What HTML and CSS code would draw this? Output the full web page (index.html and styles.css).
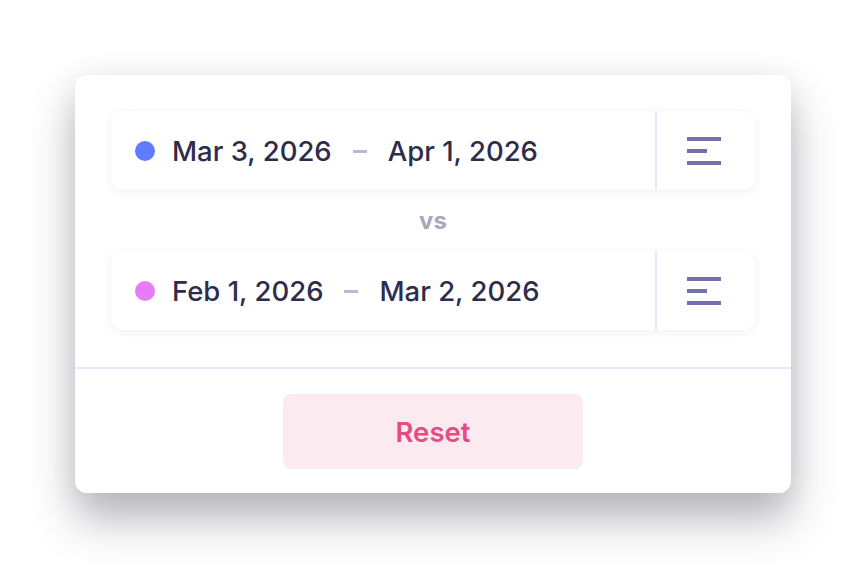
FILE: index.html
```html
<!DOCTYPE html>
<html lang="en">
<head>
    <meta charset="UTF-8">
    <meta name="viewport" content="width=device-width, initial-scale=1.0">
    <title>Compare ranges</title>
    <link rel="stylesheet" href="styles.css">
</head>
<body>

<div class="card">
    <div class="ranges">
        <div class="range">
            <div class="range-dates">
                <span class="dot dot-current"></span>
                <span class="date">Mar 3, 2026</span>
                <span class="dash"></span>
                <span class="date">Apr 1, 2026</span>
            </div>
            <button class="range-menu" aria-label="Presets">
                <svg width="34" height="28" viewBox="0 0 34 28">
                    <rect x="0" y="0" width="34" height="4" fill="#7471a8"/>
                    <rect x="0" y="12" width="20" height="4" fill="#7471a8"/>
                    <rect x="0" y="24" width="34" height="4" fill="#7471a8"/>
                </svg>
            </button>
        </div>

        <div class="vs">vs</div>

        <div class="range">
            <div class="range-dates">
                <span class="dot dot-previous"></span>
                <span class="date">Feb 1, 2026</span>
                <span class="dash"></span>
                <span class="date">Mar 2, 2026</span>
            </div>
            <button class="range-menu" aria-label="Presets">
                <svg width="34" height="28" viewBox="0 0 34 28">
                    <rect x="0" y="0" width="34" height="4" fill="#7471a8"/>
                    <rect x="0" y="12" width="20" height="4" fill="#7471a8"/>
                    <rect x="0" y="24" width="34" height="4" fill="#7471a8"/>
                </svg>
            </button>
        </div>
    </div>

    <div class="card-footer">
        <button class="reset-btn">Reset</button>
    </div>
</div>

</body>
</html>
```

FILE: styles.css
```css
body {
    font-family: Inter, "Noto Sans", sans-serif;
    margin: 0;
    padding: 0;
    display: flex;
    justify-content: center;
    align-items: center;
    min-height: 100vh;
    background-color: #ffffff;
}
.card {
    width: 716px;
    background: white;
    border-radius: 12px;
    box-shadow: 0 26px 44px rgba(40, 40, 60, 0.34), 0 0 30px rgba(40, 40, 60, 0.06);
}
.ranges {
    padding: 36px 36px 37px;
    border-bottom: 2px solid #e9e7fb;
}
.range {
    display: flex;
    height: 79px;
    background: white;
    border-radius: 12px;
    box-shadow: 0 2px 10px rgba(40, 40, 80, 0.07);
}
.range-dates {
    flex: 1;
    display: flex;
    align-items: center;
    padding-left: 24px;
    border-right: 2px solid #e8e6fa;
}
.dot {
    width: 20px;
    height: 20px;
    border-radius: 50%;
    margin-right: 17px;
}
.dot-current {
    background-color: #5f7cff;
}
.dot-previous {
    background-color: #e77cf6;
}
.date {
    font-size: 27.5px;
    font-weight: 500;
    color: #2e2c4b;
}
.dash {
    width: 14px;
    height: 3px;
    background-color: #bbb9d8;
    margin: 2px 21px 0;
}
.range-menu {
    width: 98px;
    display: flex;
    align-items: center;
    justify-content: center;
    background: none;
    border: none;
    padding: 0 4px 0 0;
    cursor: pointer;
}
.vs {
    height: 61px;
    display: flex;
    align-items: center;
    justify-content: center;
    font-size: 24px;
    font-weight: 700;
    color: #aaa9bc;
}
.card-footer {
    display: flex;
    justify-content: center;
    padding: 25px 0 24px;
}
.reset-btn {
    width: 300px;
    height: 75px;
    border: none;
    border-radius: 8px;
    background-color: #fceaf1;
    color: #e64c81;
    font-family: Inter, "Noto Sans", sans-serif;
    font-size: 27.5px;
    font-weight: 600;
    cursor: pointer;
}
```
